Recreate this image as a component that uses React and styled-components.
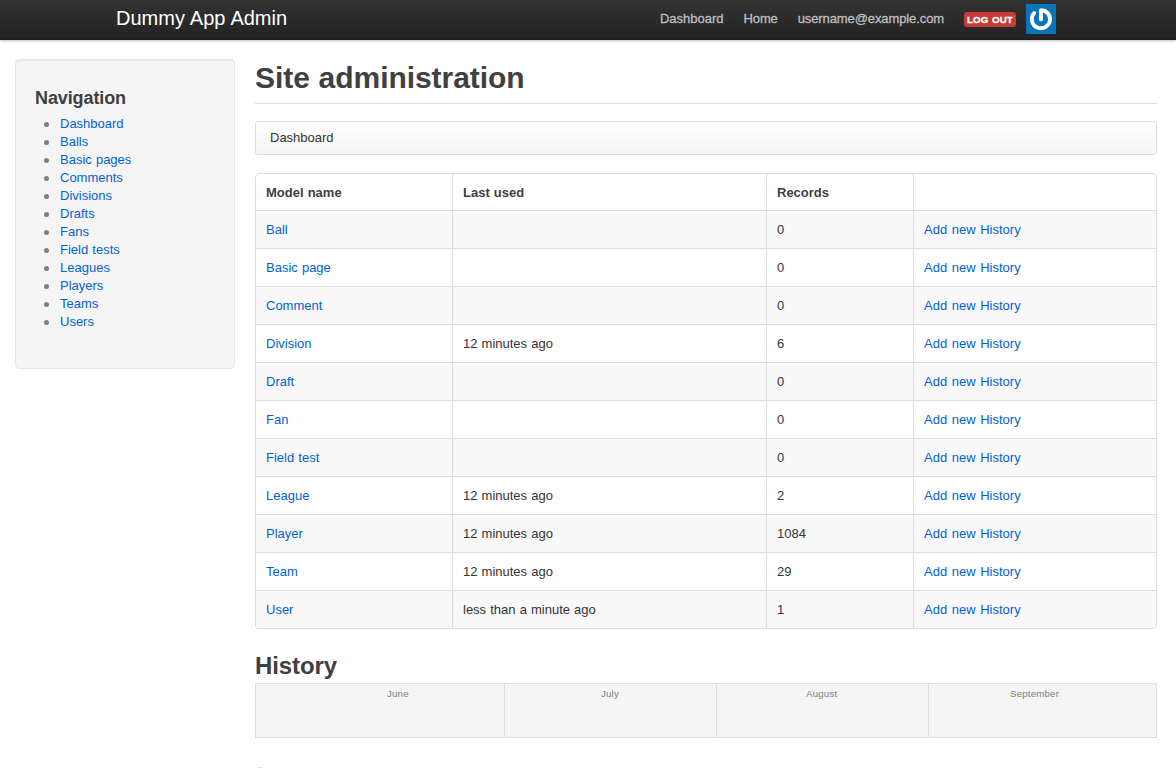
import React from "react";
import styled, { createGlobalStyle } from "styled-components";

const GlobalStyle = createGlobalStyle`
  * { box-sizing: border-box; }
  html { height: 100%; overflow: hidden; }
  body {
    margin: 0;
    height: 768px;
    overflow: hidden;
    background: #fff;
    color: #333;
    font: 13px/18px "Liberation Sans", Arial, sans-serif;
    word-spacing: 0.5px;
  }
  a { color: #0062d5; text-decoration: none; }
`;

const Topbar = styled.header`
  height: 40px;
  background: linear-gradient(#333, #222);
  box-shadow: 0 1px 3px rgba(0, 0, 0, 0.25), inset 0 -1px 0 rgba(0, 0, 0, 0.1);
`;
const TopbarInner = styled.div`
  display: flex;
  align-items: center;
  justify-content: space-between;
  width: 940px;
  height: 38px;
  margin: 0 auto 0 116px;
`;
const Brand = styled.a`
  && { color: #fff; }
  font-size: 20px;
  line-height: 20px;
  margin-top: -2px;
`;
const TopLinks = styled.nav`
  display: flex;
  align-items: center;
`;
const TopLink = styled.a`
  && { color: #bfbfbf; }
  margin-right: 20px;
  letter-spacing: ${(p) => p.$tracking || 0}px;
  -webkit-text-stroke: 0.3px #bfbfbf;
`;
const LogoutLabel = styled.a`
  && { color: #fff; }
  height: 15px;
  width: 52px;
  margin-right: 10px;
  border-radius: 3px;
  background: #c43c35;
  font-size: 9.75px;
  font-weight: bold;
  line-height: 15px;
  letter-spacing: 0.15px;
  text-align: center;
  text-transform: uppercase;
  white-space: nowrap;
  -webkit-text-stroke: 0.3px #fff;
`;
const Avatar = styled.svg`
  display: block;
  width: 30px;
  height: 30px;
`;

const Page = styled.div`
  display: flex;
  gap: 20px;
  padding: 19px 19px 0 15px;
`;
const Sidebar = styled.aside`
  width: 220px;
  height: 310px;
  padding: 20px 19px 19px;
  background: #f5f5f5;
  border: 1px solid #e6e6e6;
  border-radius: 4px;
  box-shadow: inset 0 1px 1px rgba(0, 0, 0, 0.05);
`;
const SidebarTitle = styled.h3`
  margin: 0;
  padding-top: 1px;
  color: #404040;
  font-size: 18px;
  line-height: 34px;
  letter-spacing: -0.1px;
`;
const NavList = styled.ul`
  margin: 0;
  padding: 0;
  list-style: none;
`;
const NavItem = styled.li`
  display: flex;
  align-items: center;
  height: 18px;
  padding-left: 9px;
  &::before {
    content: "";
    width: 5px;
    height: 5px;
    margin: 0 11px 0 0;
    border-radius: 50%;
    background: #808080;
  }
`;
const Main = styled.main`
  flex: 1;
  min-width: 0;
`;
const PageTitle = styled.h1`
  margin: 0 0 17px;
  padding: 1px 0 8px;
  border-bottom: 1px solid #ddd;
  color: #404040;
  font-size: 30px;
  line-height: 35px;
  letter-spacing: -0.05px;
`;
const Breadcrumb = styled.div`
  height: 34px;
  margin-bottom: 18px;
  padding: 7px 14px;
  border: 1px solid #ddd;
  border-radius: 3px;
  background: linear-gradient(#fff, #f5f5f5);
  box-shadow: inset 0 1px 0 #fff;
`;
const Table = styled.table`
  width: 100%;
  table-layout: fixed;
  border: 1px solid #ddd;
  border-radius: 4px;
  border-collapse: separate;
  border-spacing: 0;
  overflow: hidden;
`;
const HeadCell = styled.th`
  width: ${(p) => p.$width}px;
  height: 36px;
  padding: 2px 10px 0;
  text-align: left;
  color: #404040;
  & + & { border-left: 1px solid #ddd; }
`;
const Row = styled.tr`
  &:nth-child(odd) { background: #f9f9f9; }
`;
const Cell = styled.td`
  height: 38px;
  padding: 0 10px;
  border-top: 1px solid #ddd;
  & + & { border-left: 1px solid #ddd; }
`;
const ActionLinks = styled.span`
  word-spacing: 1px;
`;
const SectionTitle = styled.h2`
  margin: 19px 0 0;
  color: #404040;
  font-size: 24px;
  line-height: 35px;
  letter-spacing: -0.1px;
`;
const Timeline = styled.div`
  display: flex;
  height: 55px;
  border: 1px solid #ddd;
  background: #f5f5f5;
`;
const Month = styled.div`
  width: ${(p) => p.$width}px;
  padding-left: ${(p) => p.$inset}px;
  color: #808080;
  font-size: 9.75px;
  line-height: 19px;
  letter-spacing: 0.15px;
  & + & { border-left: 1px solid #ddd; }
`;
const TimelineHandle = styled.div`
  width: 10px;
  height: 10px;
  margin-top: 29px;
  border: 1px solid #ddd;
  border-radius: 50%;
`;

const navigation = ["Dashboard", "Balls", "Basic pages", "Comments", "Divisions", "Drafts", "Fans", "Field tests", "Leagues", "Players", "Teams", "Users"];

const models = [
  ["Ball", "", 0],
  ["Basic page", "", 0],
  ["Comment", "", 0],
  ["Division", "12 minutes ago", 6],
  ["Draft", "", 0],
  ["Fan", "", 0],
  ["Field test", "", 0],
  ["League", "12 minutes ago", 2],
  ["Player", "12 minutes ago", 1084],
  ["Team", "12 minutes ago", 29],
  ["User", "less than a minute ago", 1],
];

const columns = [
  ["Model name", 196],
  ["Last used", 314],
  ["Records", 147],
  ["", 243],
];

const months = [
  { name: "June", width: 248, inset: 131 },
  { name: "July", width: 212, inset: 96 },
  { name: "August", width: 212, inset: 89 },
  { name: "September", width: 228, inset: 81 },
];

export default function App() {
  return (
    <>
      <GlobalStyle />
      <Topbar>
        <TopbarInner>
          <Brand href="#">Dummy App Admin</Brand>
          <TopLinks>
            <TopLink href="#">Dashboard</TopLink>
            <TopLink href="#" $tracking={-0.15}>Home</TopLink>
            <TopLink href="#" $tracking={-0.1}>username@example.com</TopLink>
            <LogoutLabel href="#">Log out</LogoutLabel>
            <Avatar viewBox="0 0 30 30">
              <rect width="30" height="30" fill="#0a74b9" />
              <path
                d="M15 15.4V6.2C20.2 6.2 24 10.2 24 15.1A9.1 9.1 0 1 1 8.2 9"
                fill="none"
                stroke="#fff"
                strokeWidth="3.9"
                strokeLinecap="round"
                strokeLinejoin="round"
              />
            </Avatar>
          </TopLinks>
        </TopbarInner>
      </Topbar>
      <Page>
        <Sidebar>
          <SidebarTitle>Navigation</SidebarTitle>
          <NavList>
            {navigation.map((item) => (
              <NavItem key={item}><a href="#">{item}</a></NavItem>
            ))}
          </NavList>
        </Sidebar>
        <Main>
          <PageTitle>Site administration</PageTitle>
          <Breadcrumb>Dashboard</Breadcrumb>
          <Table>
            <thead>
              <tr>
                {columns.map(([label, width]) => (
                  <HeadCell key={label} $width={width}>{label}</HeadCell>
                ))}
              </tr>
            </thead>
            <tbody>
              {models.map(([name, used, records]) => (
                <Row key={name}>
                  <Cell><a href="#">{name}</a></Cell>
                  <Cell>{used}</Cell>
                  <Cell>{records}</Cell>
                  <Cell>
                    <ActionLinks><a href="#">Add new</a> <a href="#">History</a></ActionLinks>
                  </Cell>
                </Row>
              ))}
            </tbody>
          </Table>
          <SectionTitle>History</SectionTitle>
          <Timeline>
            {months.map((m) => (
              <Month key={m.name} $width={m.width} $inset={m.inset}>{m.name}</Month>
            ))}
          </Timeline>
          <TimelineHandle />
        </Main>
      </Page>
    </>
  );
}
